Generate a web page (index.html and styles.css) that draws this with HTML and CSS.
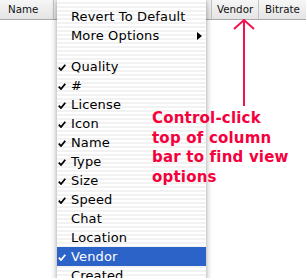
FILE: index.html
```html
<!DOCTYPE html>
<html lang="en">
<head>
    <meta charset="UTF-8">
    <meta name="viewport" content="width=device-width, initial-scale=1.0">
    <title>Column Options</title>
    <link rel="stylesheet" href="styles.css">
</head>
<body>
    <div class="window">
        <div class="header">
            <div class="col col-name">Name</div>
            <div class="col col-hidden"></div>
            <div class="col col-vendor">Vendor</div>
            <div class="col col-bitrate">Bitrate</div>
        </div>
        <div class="list"></div>

        <!-- popup menu over the column header -->
        <ul class="menu">
            <li class="item"><span class="check"></span>Revert To Default</li>
            <li class="item submenu"><span class="check"></span>More Options</li>
            <li class="sep"></li>
            <li class="item on"><span class="check"></span>Quality</li>
            <li class="item on"><span class="check"></span>#</li>
            <li class="item on"><span class="check"></span>License</li>
            <li class="item on"><span class="check"></span>Icon</li>
            <li class="item on"><span class="check"></span>Name</li>
            <li class="item on"><span class="check"></span>Type</li>
            <li class="item on"><span class="check"></span>Size</li>
            <li class="item on"><span class="check"></span>Speed</li>
            <li class="item"><span class="check"></span>Chat</li>
            <li class="item"><span class="check"></span>Location</li>
            <li class="item on selected"><span class="check"></span>Vendor</li>
            <li class="item"><span class="check"></span>Created</li>
        </ul>

        <svg class="arrow" width="24" height="90" viewBox="0 0 24 90">
            <path d="M12 2 V88 M2 11 L12 2 L22 11" fill="none" stroke="#f0104e" stroke-width="2"/>
        </svg>
        <p class="note">Control-click<br>top of column<br>bar to find view<br>options</p>
    </div>
</body>
</html>
```

FILE: styles.css
```css
body {
    margin: 0;
    font-family: "DejaVu Sans", sans-serif;
    background: #fff;
}
.window {
    position: relative;
    width: 306px;
    height: 278px;
    overflow: hidden;
}
.header {
    display: flex;
    height: 19px;
    border-bottom: 1px solid #a9a9a9;
    background: linear-gradient(#f6f6f6, #e4e4e4);
    font-size: 10.3px;
    line-height: 19px;
    color: #111;
}
.col {
    box-sizing: border-box;
    border-right: 1px solid #c4c4c4;
}
.col-name {
    width: 54px;
    padding-left: 8px;
}
.col-hidden {
    width: 158px;
}
.col-vendor {
    width: 47px;
    padding-left: 5px;
}
.col-bitrate {
    flex: 1;
    padding-left: 6px;
    border-right: none;
}
.list {
    height: 258px;
}
.menu {
    position: absolute;
    left: 57px;
    top: 0;
    width: 149px;
    height: 300px;
    margin: 0;
    padding: 7px 0 0;
    list-style: none;
    background: repeating-linear-gradient(#ffffff 0 2px, #f2f2f2 2px 4px);
    box-shadow: 0 0 6px rgba(0, 0, 0, 0.4);
    font-size: 13px;
    color: #000;
}
.item {
    display: flex;
    align-items: center;
    height: 19px;
    line-height: 19px;
    letter-spacing: 0.15px;
}
.check {
    width: 14px;
    height: 19px;
    flex: none;
}
.on .check {
    background: no-repeat 1px 7px / 8px 7px url("data:image/svg+xml;utf8,<svg xmlns='http://www.w3.org/2000/svg' viewBox='0 0 8 7'><path d='M0.8 3.6 L3 6 L7.3 0.8' fill='none' stroke='black' stroke-width='1.8'/></svg>");
}
.selected {
    background: #2c63c9;
    color: #fff;
}
.selected .check {
    background-image: url("data:image/svg+xml;utf8,<svg xmlns='http://www.w3.org/2000/svg' viewBox='0 0 8 7'><path d='M0.8 3.6 L3 6 L7.3 0.8' fill='none' stroke='white' stroke-width='1.8'/></svg>");
}
.submenu::after {
    content: "";
    margin-left: auto;
    margin-right: 4px;
    border-left: 5px solid #000;
    border-top: 4.5px solid transparent;
    border-bottom: 4.5px solid transparent;
}
.sep {
    height: 12px;
}
.arrow {
    position: absolute;
    left: 232px;
    top: 18px;
}
.note {
    position: absolute;
    left: 152px;
    top: 109px;
    margin: 0;
    font-size: 15px;
    font-weight: bold;
    line-height: 19.5px;
    letter-spacing: 0.2px;
    color: #f5003d;
}
```
